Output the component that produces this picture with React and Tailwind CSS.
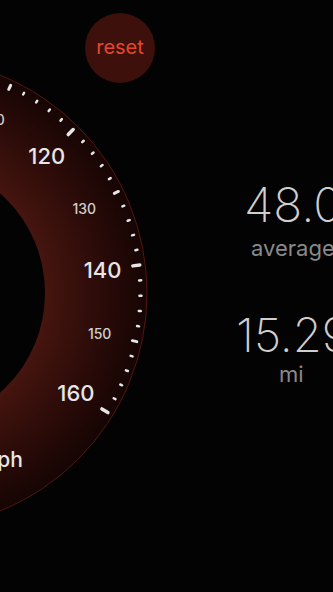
import React from 'react';

const CX = -88;
const CY = 293;
const angle = (v) => ((-7 + (v - 140) * 1.92) * Math.PI) / 180;
const pt = (v, r) => [CX + r * Math.cos(angle(v)), CY + r * Math.sin(angle(v))];

// only the part of the dial that shows on screen
const ticks = [];
for (let v = 100; v <= 160; v += 2) ticks.push(v);
const labels = [110, 120, 130, 140, 150, 160];

const Gauge = () => (
  <svg width="160" height="592" viewBox="0 0 160 592" className="shrink-0">
    <defs>
      <radialGradient id="ring" cx={CX} cy={CY} r="236" gradientUnits="userSpaceOnUse">
        <stop offset="0.56" stopColor="#46150f" />
        <stop offset="0.8" stopColor="#2b0b08" />
        <stop offset="1" stopColor="#150504" />
      </radialGradient>
    </defs>
    <circle cx={CX} cy={CY} r="235" fill="url(#ring)" stroke="#52170f" strokeWidth="1" />
    <circle cx={CX} cy={CY} r="133" fill="#030303" />

    {ticks.map((v) => {
      const major = v % 20 === 0;
      const mid = v % 10 === 0;
      const [r1, r2, w] = major ? [222.5, 229.5, 3.5] : mid ? [225.5, 230, 3] : [227.5, 229.5, 2.5];
      const [x1, y1] = pt(v, r1);
      const [x2, y2] = pt(v, r2);
      return (
        <line key={v} x1={x1} y1={y1} x2={x2} y2={y2} stroke="#e6e6e6" strokeWidth={w} strokeLinecap="round" />
      );
    })}

    {labels.map((v) => {
      const major = v % 20 === 0;
      const [x, y] = pt(v, 192);
      return (
        <text
          key={v}
          x={x}
          y={y}
          textAnchor="middle"
          dominantBaseline="central"
          fontSize={major ? 22 : 14}
          fontWeight="500"
          fill={major ? '#e6e6e6' : '#d0d0d0'}
        >
          {v}
        </text>
      );
    })}

    <text x="23" y="467" textAnchor="end" fontSize="21" fontWeight="500" fill="#e6e6e6">
      mph
    </text>
  </svg>
);

const App = () => {
  return (
    <div className="relative flex w-[333px] h-[592px] overflow-hidden bg-[#030303] font-['Inter',sans-serif]">
      <Gauge />

      <button className="absolute left-[85px] top-[13px] w-[70px] h-[70px] rounded-full bg-[#3d100b] flex items-center justify-center pb-[2px] text-[20px] leading-none text-[#e4472e]">
        reset
      </button>

      <div className="flex flex-col ml-[76px] pt-[181px] whitespace-nowrap">
        <span className="ml-[8px] text-[48px] leading-none font-extralight text-[#cfcfcf]">48.0</span>
        <span className="ml-[15px] mt-[8px] text-[22px] leading-none text-[#8a8a8a]">average</span>
        <span className="mt-[52px] text-[47px] leading-none font-extralight text-[#cfcfcf]">15.29</span>
        <span className="ml-[43px] mt-[5px] text-[22px] leading-none text-[#8a8a8a]">mi</span>
      </div>
    </div>
  );
};

export default App;
